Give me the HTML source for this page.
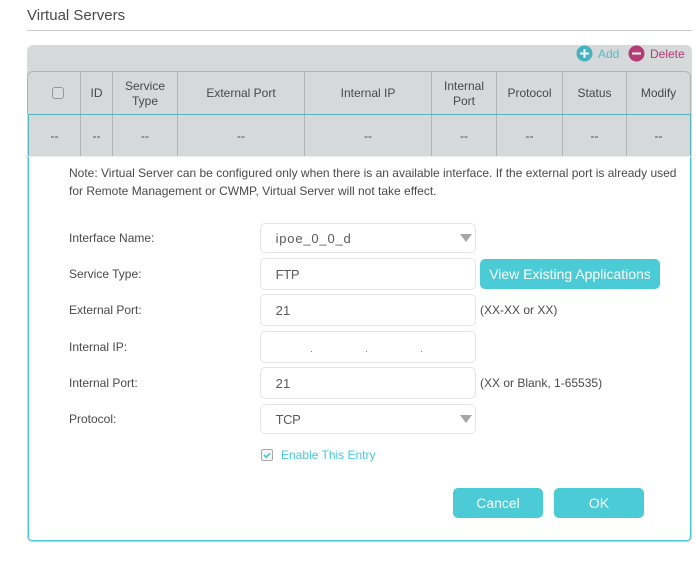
<!DOCTYPE html>
<html><head><meta charset="utf-8">
<style>
html,body{margin:0;padding:0;background:#fff;width:696px;height:569px;overflow:hidden}
body{position:relative;font-family:"Liberation Sans",sans-serif;font-size:12px;color:#4a4a4a}
.a{position:absolute;white-space:nowrap}
.v{position:absolute;top:72px;width:1px;height:84px;background:#b0b3b4}
.c{position:absolute;text-align:center;line-height:14.5px;color:#46494c}
.l{position:absolute;left:69px;color:#4a4a4a;line-height:14px;white-space:nowrap}
.i{position:absolute;left:260px;width:214px;border:1px solid #e6e6e6;border-radius:5px;background:#fff;font-size:13px;color:#5a5a5a;box-sizing:content-box}
.i span{position:absolute;left:14.6px}
.t{position:absolute;left:460px;width:0;height:0;border-left:6px solid transparent;border-right:6px solid transparent;border-top:8px solid #a5a5a5}
.b{position:absolute;background:#4acbd6;color:#fff;border-radius:5px;text-align:center;font-size:14px}
.h{position:absolute;left:480px;color:#4a4a4a;white-space:nowrap;line-height:14px}
</style></head><body>
<div class="a" style="left:27px;top:7px;font-size:15px;line-height:17px;color:#4a4a4a">Virtual Servers</div>
<div class="a" style="left:27px;top:30px;width:665px;height:1px;background:#ccc"></div>

<div class="a" style="left:27px;top:45px;width:665px;height:112px;background:#d6d9da;border-radius:6px 6px 0 0"></div>
<div class="a" style="left:27px;top:71px;width:664px;height:43px;box-sizing:border-box;border:1px solid #b0b3b4;border-bottom:0;border-radius:6px 6px 0 0"></div>
<div class="v" style="left:80px"></div><div class="v" style="left:112px"></div><div class="v" style="left:177px"></div><div class="v" style="left:304px"></div><div class="v" style="left:431px"></div><div class="v" style="left:496px"></div><div class="v" style="left:562px"></div><div class="v" style="left:626px"></div>
<div class="a" style="left:28px;top:114px;width:663px;height:1px;background:#55b5bf"></div>
<div class="a" style="left:28px;top:114px;width:1px;height:43px;background:#55b5bf"></div>
<div class="a" style="left:690px;top:114px;width:1px;height:43px;background:#55b5bf"></div>
<div class="a" style="left:28px;top:156px;width:663px;height:1px;background:#eceded"></div>

<svg class="a" style="left:576px;top:45px" width="17" height="17" viewBox="0 0 17 17"><circle cx="8.5" cy="8.5" r="8" fill="#45b2c0"/><path d="M8.5 4v9M4 8.5h9" stroke="#e8f4f5" stroke-width="2.2"/></svg>
<div class="a" style="left:598px;top:47px;color:#55b8c8;line-height:14px">Add</div>
<svg class="a" style="left:628px;top:45px" width="17" height="17" viewBox="0 0 17 17"><circle cx="8.5" cy="8.5" r="8" fill="#b43c74"/><path d="M4 8.5h9" stroke="#f2e2ea" stroke-width="2.2"/></svg>
<div class="a" style="left:650px;top:47px;color:#b43c74;line-height:14px">Delete</div>

<div class="a" style="left:52px;top:87px;width:12px;height:12px;box-sizing:border-box;border:1.5px solid #94979a;border-radius:3px;background:#d9dbdc"></div>
<div class="c" style="left:81px;width:31px;top:86px">ID</div>
<div class="c" style="left:113px;width:64px;top:79px">Service<br>Type</div>
<div class="c" style="left:178px;width:126px;top:86px">External Port</div>
<div class="c" style="left:305px;width:126px;top:86px">Internal IP</div>
<div class="c" style="left:432px;width:64px;top:79px">Internal<br>Port</div>
<div class="c" style="left:497px;width:65px;top:86px">Protocol</div>
<div class="c" style="left:563px;width:63px;top:86px">Status</div>
<div class="c" style="left:627px;width:63px;top:86px">Modify</div>

<div class="c" style="left:29px;width:51px;top:129px">--</div>
<div class="c" style="left:81px;width:31px;top:129px">--</div>
<div class="c" style="left:113px;width:64px;top:129px">--</div>
<div class="c" style="left:178px;width:126px;top:129px">--</div>
<div class="c" style="left:305px;width:126px;top:129px">--</div>
<div class="c" style="left:432px;width:64px;top:129px">--</div>
<div class="c" style="left:497px;width:65px;top:129px">--</div>
<div class="c" style="left:563px;width:63px;top:129px">--</div>
<div class="c" style="left:627px;width:63px;top:129px">--</div>

<div class="a" style="left:27px;top:157px;width:665px;height:385px;box-sizing:border-box;border:2px solid #cfd2d3;border-top:0;border-radius:0 0 5px 5px"></div>
<div class="a" style="left:28px;top:157px;width:663px;height:384px;box-sizing:border-box;border:1px solid #45cbd8;border-top:0;border-radius:0 0 4px 4px;background:#fff"></div>

<div class="a" style="left:69px;top:164px;line-height:18px;color:#4a4a4a">Note: Virtual Server can be configured only when there is an available interface. If the external port is already used<br>for Remote Management or CWMP, Virtual Server will not take effect.</div>

<div class="l" style="top:231px">Interface Name:</div>
<div class="l" style="top:267px">Service Type:</div>
<div class="l" style="top:303px">External Port:</div>
<div class="l" style="top:340px">Internal IP:</div>
<div class="l" style="top:376px">Internal Port:</div>
<div class="l" style="top:412px">Protocol:</div>

<div class="i" style="top:223px;height:28px"><span style="top:7px;letter-spacing:.8px">ipoe_0_0_d</span></div><div class="t" style="top:234px"></div>
<div class="i" style="top:258px;height:30px"><span style="top:8px;letter-spacing:-.3px">FTP</span></div>
<div class="i" style="top:294px;height:30px"><span style="top:8px;letter-spacing:.2px">21</span></div>
<div class="i" style="top:331px;height:30px"></div>
<div class="a" style="left:311px;top:351px;width:1px;height:1px;background:#5a86a8"></div>
<div class="a" style="left:366px;top:351px;width:1px;height:1px;background:#5a86a8"></div>
<div class="a" style="left:421px;top:351px;width:1px;height:1px;background:#5a86a8"></div>
<div class="i" style="top:367px;height:30px"><span style="top:8px;letter-spacing:.2px">21</span></div>
<div class="i" style="top:404px;height:28px"><span style="top:7px;letter-spacing:-.4px">TCP</span></div><div class="t" style="top:415px"></div>

<div class="b" style="left:480px;top:259px;width:180px;height:30px;line-height:30px">View Existing Applications</div>
<div class="h" style="top:303px">(XX-XX or XX)</div>
<div class="h" style="top:376px">(XX or Blank, 1-65535)</div>

<div class="a" style="left:261px;top:449px;width:10px;height:10px;border:1px solid #aaa;border-radius:2px;background:#f4f4f4"></div>
<svg class="a" style="left:261px;top:449px" width="12" height="12" viewBox="0 0 12 12"><path d="M3 6l2.2 2.2L9 4.2" fill="none" stroke="#45cbd8" stroke-width="1.7"/></svg>
<div class="a" style="left:281px;top:448px;line-height:14px;color:#45cbd8">Enable This Entry</div>

<div class="b" style="left:453px;top:488px;width:90px;height:30px;line-height:30px">Cancel</div>
<div class="b" style="left:554px;top:488px;width:90px;height:30px;line-height:30px">OK</div>
</body></html>
